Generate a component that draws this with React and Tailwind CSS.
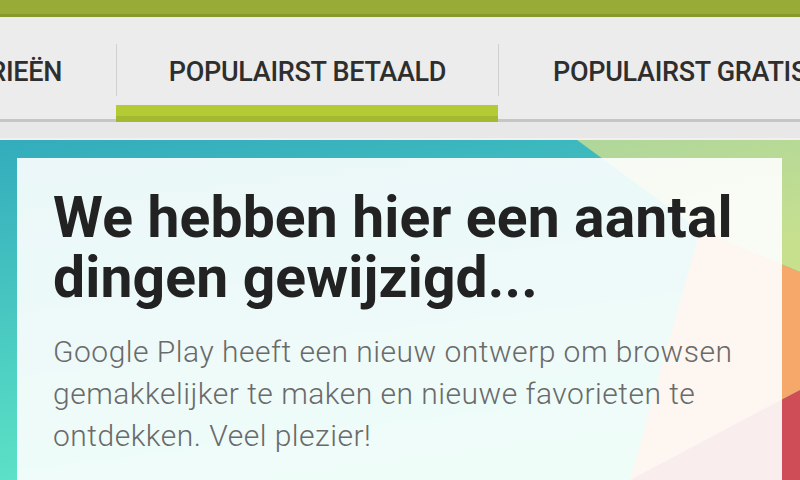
import React from 'react';

const Backdrop = () => (
  <svg className="absolute inset-0 w-full h-full" viewBox="0 0 800 340" preserveAspectRatio="none">
    <defs>
      <linearGradient id="teal" x1="0" y1="0" x2="0.3" y2="1">
        <stop offset="0" stopColor="#33acbc" />
        <stop offset="1" stopColor="#5fe6c7" />
      </linearGradient>
      <linearGradient id="green" x1="0" y1="0" x2="0.4" y2="1">
        <stop offset="0" stopColor="#afd69b" />
        <stop offset="1" stopColor="#c6e08e" />
      </linearGradient>
    </defs>
    <rect width="800" height="340" fill="url(#teal)" />
    <polygon points="577,0 800,0 800,132 700,90" fill="url(#green)" />
    <polygon points="700,90 800,132 800,250 630,340" fill="#f6a86b" />
    <polygon points="630,340 800,250 800,340" fill="#cf4d57" />
  </svg>
);

const Tab = ({ label, width, active, align = 'center' }) => {
  const place =
    align === 'end' ? 'justify-end pr-[54px]' : align === 'start' ? 'justify-start pl-[54px]' : 'justify-center';
  return (
    <div className={`flex flex-col shrink-0 ${width}`}>
      <div className={`h-[88px] pt-[22px] flex items-center overflow-hidden whitespace-nowrap ${place}`}>
        <span className="text-[27px] font-medium text-[#2e2e2e] tracking-[-0.3px]">{label}</span>
      </div>
      {active ? (
        <div className="h-[17px] bg-[#b4cb36] border-b-[6px] border-[#a3b92f]" />
      ) : (
        <>
          <div className="h-[14px]" />
          <div className="h-[3px] bg-[#c6c6c6]" />
        </>
      )}
    </div>
  );
};

const Divider = ({ active }) => (
  <div className="flex flex-col shrink-0 w-px">
    <div className="h-[27px]" />
    <div className="h-[52px] bg-[#d0d0d0]" />
    <div className="flex-1" />
    <div className={active ? 'h-[17px] bg-[#b4cb36] border-b-[6px] border-[#a3b92f]' : 'h-[3px] bg-[#c6c6c6]'} />
  </div>
);

export default function App() {
  return (
    <div className="w-[800px] h-[480px] overflow-hidden flex flex-col bg-[#e9e9e9] [font-family:Roboto,'Noto_Sans',sans-serif]">
      {/* action bar */}
      <div className="h-[17px] shrink-0 bg-[#98ab37] border-b-[3px] border-[#86992d]" />

      {/* tabs */}
      <div className="h-[105px] shrink-0 flex bg-[#ececec] overflow-hidden">
        <Tab label="CATEGORIEËN" width="w-[116px]" align="end" />
        <Divider active />
        <Tab label="POPULAIRST BETAALD" width="w-[381px]" active />
        <Divider />
        <Tab label="POPULAIRST GRATIS" width="w-[382px]" align="start" />
      </div>

      <div className="h-[18px] shrink-0 bg-[#e8e8e8] border-b-2 border-[#f5f0ef]" />

      {/* promo */}
      <div className="relative flex-1">
        <Backdrop />
        <div className="relative ml-[17px] mt-[18px] w-[765px] h-full bg-white/90 px-[36px] pt-[30px]">
          <h1 className="text-[57px] leading-[60px] font-bold text-[#222] tracking-[0.15px]">
            We hebben hier een aantal dingen gewijzigd...
          </h1>
          <p className="mt-[23px] text-[30px] leading-[42px] font-light text-[#6a6a6a] tracking-[0.5px]">
            Google Play heeft een nieuw ontwerp om browsen gemakkelijker te maken en nieuwe favorieten te
            ontdekken. Veel plezier!
          </p>
        </div>
      </div>
    </div>
  );
}
